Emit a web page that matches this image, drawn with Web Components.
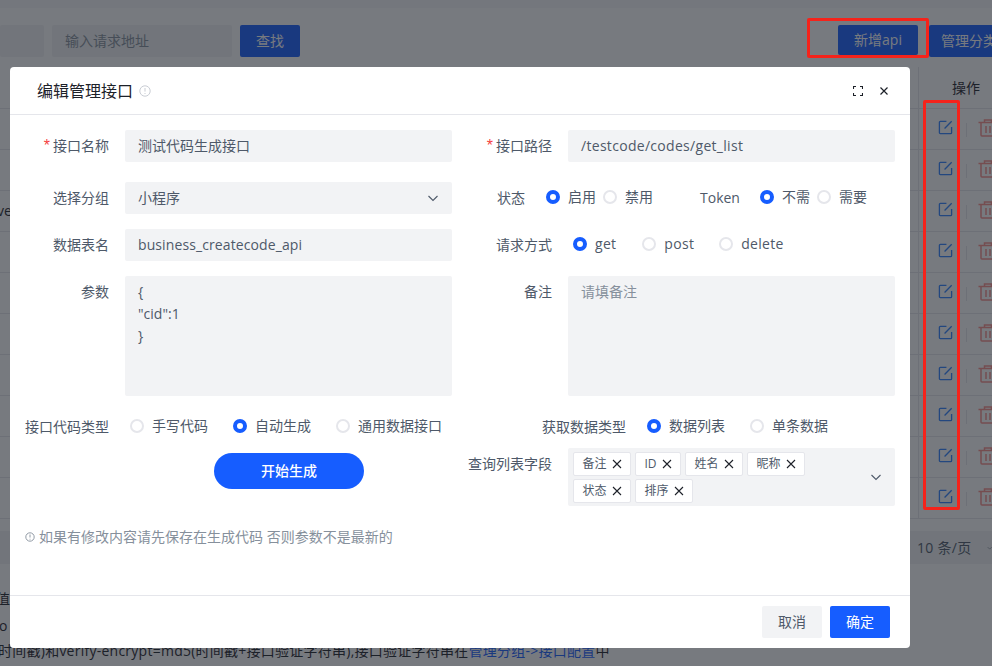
<!DOCTYPE html>
<html lang="zh"><head><meta charset="utf-8"><title>编辑管理接口</title>
<style>
html,body{margin:0;padding:0;background:#fff}
body{font:14px/22px "Open Sans","Noto Sans CJK SC",sans-serif;color:#1d2129}
</style></head><body>
<api-app></api-app>
<script>
const def=(name,css,html)=>{
  customElements.define(name,class extends HTMLElement{
    connectedCallback(){
      if(this.shadowRoot)return;
      const r=this.attachShadow({mode:'open'});
      r.innerHTML='<style>'+css+'</style>'+(typeof html==='function'?html(this):html);
    }
  });
};
const chev='<svg width="12" height="12" viewBox="0 0 12 12" fill="none" stroke="#4e5969" stroke-width="1.1"><path d="M1.5 4 6 8.5 10.5 4"/></svg>';
const x12='<svg width="10" height="10" viewBox="0 0 10 10" fill="none" stroke="#1d2129" stroke-width="1.1"><path d="M1 1l8 8M9 1l-8 8"/></svg>';

def('x-radio',`:host{display:inline-flex;flex:none;align-items:center;gap:8px;color:#4e5969;font-size:14px;line-height:22px;margin-right:var(--gap,25px);white-space:nowrap;position:relative;top:-1px}
.r{width:14px;height:14px;border-radius:50%;box-sizing:border-box;border:2px solid #e5e6eb;background:#fff;flex:none}
:host([on]) .r{border:4px solid #165dff}`,`<span class="r"></span><slot></slot>`);

def('x-field',`:host{display:flex;align-items:flex-start;min-width:0}
.l{flex:none;width:var(--lw,99px);margin-right:var(--lg,16px);text-align:right;color:#4e5969;line-height:32px;white-space:nowrap}
.c{flex:1;min-width:0;display:flex;align-items:center;min-height:32px}
i{font-style:normal;color:#f53f3f;margin-right:3px;font-size:16px;line-height:0;font-family:"Liberation Sans",sans-serif}`,
 el=>`<div class="l">${el.hasAttribute('req')?'<i>*</i>':''}${el.getAttribute('label')||''}</div><div class="c"><slot></slot></div>`);

def('x-input',`:host{display:flex;align-items:center;justify-content:space-between;flex:1;height:var(--h,32px);background:#f2f3f5;border-radius:2px;padding:0 13px;color:#4e5969;line-height:30px;box-sizing:border-box}
:host([area]){padding:5px 13px;line-height:22px;display:block;white-space:pre-line}`,`<slot></slot>`);

def('x-tag',`:host{display:inline-flex;align-items:center;justify-content:center;gap:5px;height:24px;min-width:58px;box-sizing:border-box;background:#fff;border:1px solid #e5e6eb;border-radius:2px;padding:0 8px;font-size:12px;color:#4e5969;line-height:22px}`,`<slot></slot>${x12}`);

def('x-tags',`:host{display:flex;flex:1;height:58px;box-sizing:border-box;background:#f2f3f5;border-radius:2px;padding:4px 13px 4px 5px;align-items:center}
.w{flex:1;display:flex;flex-wrap:wrap;gap:3px 4px;align-self:flex-start;padding-right:40px}`,`<div class="w"><slot></slot></div>${chev}`);

def('x-btn',`:host{display:inline-flex;align-items:center;justify-content:center;height:32px;padding:0 15px;border-radius:2px;background:var(--bg,#165dff);color:var(--fg,#fff);font-size:14px;box-sizing:border-box;white-space:nowrap;flex:none}`,`<slot></slot>`);

def('bg-row',`:host{display:flex;height:41px;box-sizing:border-box;border-bottom:1px solid #e5e6eb}
:host([head]){height:42px}
.m{flex:0 0 919px;box-sizing:border-box;border-right:1px solid #e5e6eb;display:flex;align-items:center;white-space:nowrap;color:#1d2129;overflow:hidden}
.o{flex:1;display:flex;align-items:center;padding:0 0 3px 19px;gap:13px;white-space:nowrap}
.s{width:1px;height:14px;background:#e5e6eb;position:relative;top:2px}
.e{color:#2d80ff;display:flex;width:15px}.t{color:#f98e8a;display:flex;flex:none;margin-left:-2px}`,
 el=>el.hasAttribute('head')
 ?`<div class="m"></div><div class="o" style="padding:0 0 0 33px">操作</div>`
 :`<div class="m"><slot></slot></div><div class="o"><span class="e"><svg width="15" height="15" viewBox="0 0 16 16" fill="none" stroke="currentColor" stroke-width="1.4"><path d="M14.5 7.5v6a1 1 0 0 1-1 1h-11a1 1 0 0 1-1-1v-11a1 1 0 0 1 1-1h6.5"/><path d="M7 9 14.6 1.4"/></svg></span><span class="s"></span><span class="t"><svg width="20" height="18" viewBox="0 0 20 18" fill="none" stroke="currentColor" stroke-width="1.5"><path d="M.5 3.5h19M6.5 3.5V1h7v2.5M3 3.5V16a1 1 0 0 0 1 1h12a1 1 0 0 0 1-1V3.5M8 7v7M12 7v7"/></svg></span></div>`);

def('bg-page',`:host{display:block;height:666px;overflow:hidden;background:#fff}
.band{height:8px;background:#f7f8fa}
.top{display:flex;align-items:flex-start;padding:17px 0 0 0;height:59px;box-sizing:border-box;white-space:nowrap;overflow:hidden}
.in{height:32px;background:#f2f3f5;border-radius:2px;color:#86909c;padding:0 13px;line-height:32px;box-sizing:border-box;flex:none}
x-btn{margin-left:8px}
.pg{height:33px;margin-top:12px;background:#f2f3f5;display:flex;align-items:center;padding-left:917px;white-space:nowrap;color:#4e5969;overflow:hidden;gap:15px;letter-spacing:.3px}
.n{line-height:26px;white-space:nowrap;overflow:hidden}
.n a{color:#165dff}`,
`<div class="band"></div><div class="top"><div class="in" style="width:44px;padding:0"></div><div class="in" style="width:180px;margin-left:8px">输入请求地址</div><x-btn style="width:60px">查找</x-btn><span style="flex:0 0 530px"></span><x-btn style="width:80px;height:30px">新增api</x-btn><x-btn style="margin-left:11px;width:80px">管理分类</x-btn></div>
<bg-row head></bg-row>
<bg-row></bg-row><bg-row></bg-row><bg-row><span style="margin-left:-3px">verify</span></bg-row><bg-row></bg-row><bg-row></bg-row><bg-row></bg-row><bg-row></bg-row><bg-row></bg-row><bg-row></bg-row><bg-row></bg-row>
<div class="pg">10 条/页 ${chev}</div>
<div class="n" style="margin-top:22px;margin-left:-4px">值</div>
<div class="n" style="margin-left:-6px;margin-top:1px">to</div>
<div class="n" style="margin-left:-2px;margin-top:-1px;letter-spacing:.25px">时间戳)和verify-encrypt=md5(时间戳+接口验证字符串),接口验证字符串在<a>管理分组->接口配置</a>中</div>`);

def('api-dialog',`:host{position:absolute;left:10px;top:67px;width:900px;height:581px;background:#fff;border-radius:4px;display:flex;flex-direction:column}
.hd{height:48px;box-sizing:border-box;border-bottom:1px solid #e5e6eb;display:flex;align-items:center;padding:0 22px 0 27px;flex:none}
.ti{font-size:16px;color:#1d2129;flex:1;display:flex;align-items:center;gap:6px}
.ti svg{display:block}.act{display:flex;gap:17px;align-items:center}
.bd{flex:1;padding:15px 15px 0 0;display:grid;grid-template-columns:443px 442px;align-content:start}
.lf{margin-right:1px}
.mt20{margin-top:20px}.mt15{margin-top:15px}.mt5{margin-top:5px}
.gen{margin:10px 0 0 204px}
.gen x-btn{width:150px;height:36px;border-radius:18px;font-weight:500;margin:0}
.hint{grid-column:1/3;margin:20px 0 0 15px;color:#86909c;display:flex;align-items:center;gap:4px;font-size:14px}
.hint svg{flex:none}
.ft{height:53px;box-sizing:border-box;flex:none;border-top:1px solid #e5e6eb;display:flex;align-items:center;justify-content:flex-end;gap:8px;padding:0 20px}
.ft x-btn{width:60px}`,
`<div class="hd"><div class="ti">编辑管理接口<svg width="12" height="12" viewBox="0 0 12 12" fill="none" stroke="#c9cdd4"><circle cx="6" cy="6" r="5.2"/><path d="M6 3v3.6M6 8v1"/></svg></div><div class="act">
<svg width="10" height="10" viewBox="0 0 10 10" fill="none" stroke="#1d2129" stroke-width="1.1"><path d="M.5 3V.5H3M7 .5h2.5V3M9.5 7v2.5H7M3 9.5H.5V7"/></svg>
<svg width="8" height="8" viewBox="0 0 8 8" fill="none" stroke="#1d2129" stroke-width="1.2"><path d="M.5.5l7 7M7.5.5l-7 7"/></svg></div></div>
<div class="bd">
<x-field class="lf" label="接口名称" req><x-input>测试代码生成接口</x-input></x-field>
<x-field label="接口路径" req><x-input style="letter-spacing:.3px">/testcode/codes/get_list</x-input></x-field>
<x-field class="mt20 lf" label="选择分组"><x-input>小程序${chev}</x-input></x-field>
<x-field class="mt20" label="状态" style="--lw:72px;--lg:21px"><x-radio on style="--gap:7px">启用</x-radio><x-radio style="--gap:47px">禁用</x-radio><span style="color:#4e5969;margin-right:20px">Token</span><x-radio on style="--gap:7px">不需</x-radio><x-radio>需要</x-radio></x-field>
<x-field class="mt15 lf" label="数据表名"><x-input style="letter-spacing:.1px">business_createcode_api</x-input></x-field>
<x-field class="mt15" label="请求方式" style="--lg:21px"><x-radio on style="letter-spacing:.3px;--gap:26px">get</x-radio><x-radio style="letter-spacing:.3px">post</x-radio><x-radio style="letter-spacing:.3px">delete</x-radio></x-field>
<x-field class="mt15 lf" label="参数"><x-input area style="--h:120px">{
"cid":1
}</x-input></x-field>
<x-field class="mt15" label="备注"><x-input area style="--h:120px;color:#86909c">请填备注</x-input></x-field>
<x-field class="mt15 lf" label="接口代码类型" style="--lg:21px"><x-radio>手写代码</x-radio><x-radio on>自动生成</x-radio><x-radio>通用数据接口</x-radio></x-field>
<x-field class="mt15" label="获取数据类型" style="--lw:173px;--lg:21px"><x-radio on>数据列表</x-radio><x-radio>单条数据</x-radio></x-field>
<div class="gen"><x-btn>开始生成</x-btn></div>
<x-field class="mt5" label="查询列表字段"><x-tags><x-tag>备注</x-tag><x-tag style="min-width:46px;padding:0">ID</x-tag><x-tag>姓名</x-tag><x-tag>昵称</x-tag><x-tag>状态</x-tag><x-tag>排序</x-tag></x-tags></x-field>
<div class="hint"><svg width="10" height="10" viewBox="0 0 10 10" fill="none" stroke="#86909c" stroke-width=".9"><circle cx="5" cy="5" r="4.2"/><path d="M5 2.5v3M5 6.8v.8"/></svg>如果有修改内容请先保存在生成代码 否则参数不是最新的</div>
</div>
<div class="ft"><x-btn style="--bg:#f2f3f5;--fg:#4e5969">取消</x-btn><x-btn>确定</x-btn></div>`);

def('api-app',`:host{display:block;position:relative;width:992px;height:666px;overflow:hidden}
.ov{position:absolute;inset:0;background:rgba(29,33,41,.6)}
.mark{position:absolute;border:3px solid #f5231b;border-radius:2px;box-sizing:border-box}`,
`<bg-page></bg-page><div class="ov"></div><api-dialog></api-dialog>
<div class="mark" style="left:807px;top:18px;width:122px;height:40px"></div>
<div class="mark" style="left:923px;top:100px;width:37px;height:410px"></div>`);
</script>
</body></html>
